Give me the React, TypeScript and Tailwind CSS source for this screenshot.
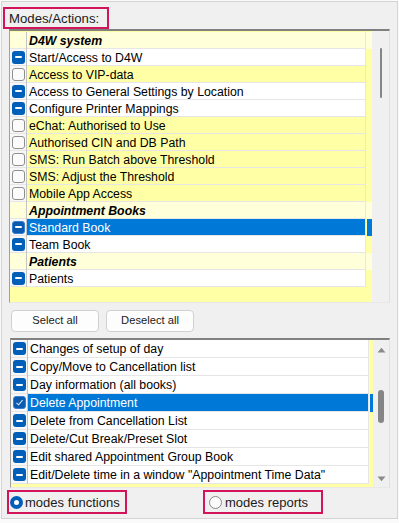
import React from 'react';

type State = 'ind' | 'off' | 'on';
type Row = { label: string; header?: boolean; state?: State; selected?: boolean };

const upperRows: Row[] = [
  { label: 'D4W system', header: true },
  { label: 'Start/Access to D4W', state: 'ind' },
  { label: 'Access to VIP-data', state: 'off' },
  { label: 'Access to General Settings by Location', state: 'ind' },
  { label: 'Configure Printer Mappings', state: 'ind' },
  { label: 'eChat: Authorised to Use', state: 'off' },
  { label: 'Authorised CIN and DB Path', state: 'off' },
  { label: 'SMS: Run Batch above Threshold', state: 'off' },
  { label: 'SMS: Adjust the Threshold', state: 'off' },
  { label: 'Mobile App Access', state: 'off' },
  { label: 'Appointment Books', header: true },
  { label: 'Standard Book', state: 'ind', selected: true },
  { label: 'Team Book', state: 'ind' },
  { label: 'Patients', header: true },
  { label: 'Patients', state: 'ind' },
];

const lowerRows: Row[] = [
  { label: 'Changes of setup of day', state: 'ind' },
  { label: 'Copy/Move to Cancellation list', state: 'ind' },
  { label: 'Day information (all books)', state: 'ind' },
  { label: 'Delete Appointment', state: 'on', selected: true },
  { label: 'Delete from Cancellation List', state: 'ind' },
  { label: 'Delete/Cut Break/Preset Slot', state: 'ind' },
  { label: 'Edit shared Appointment Group Book', state: 'ind' },
  { label: 'Edit/Delete time in a window "Appointment Time Data"', state: 'ind' },
];

const Check = ({ state, selected }: { state: State; selected?: boolean }) => {
  if (state === 'off') {
    return <div className="w-[13px] h-[13px] rounded-[3px] border border-[#8f8f8f] bg-[#fbfbfb]" />;
  }
  return (
    <div
      className={`w-[13px] h-[13px] rounded-[3px] flex items-center justify-center ${
        selected ? 'bg-[#0a5bb0] border border-[#3a7fcf]' : 'bg-[#005fb8]'
      }`}
    >
      {state === 'ind' ? (
        <div className="w-[7px] h-[2px] bg-white rounded-[1px]" />
      ) : (
        <svg width="9" height="9" viewBox="0 0 9 9">
          <path d="M1.5 4.8 L3.6 6.8 L7.6 2" fill="none" stroke="#dfe9f5" strokeWidth="1.1" />
        </svg>
      )}
    </div>
  );
};

const ListRow = ({ row, h, textW, gapW }: { row: Row; h: number; textW: number; gapW: number }) => {
  let bg = 'bg-white';
  if (row.header) bg = 'bg-[#ffffd9]';
  else if (row.state === 'off') bg = 'bg-[#ffffa6]';
  const textBg = row.selected ? 'bg-[#0078d7] text-white' : `${bg} text-black`;
  return (
    <div className="flex" style={{ height: h }}>
      <div className={`w-[16px] shrink-0 flex items-center pl-[2px] border-b border-[#e6e6e6] ${row.header ? 'bg-[#ffffd9]' : 'bg-[#f7f7f7]'}`}>
        {row.state && <Check state={row.state} selected={row.selected} />}
      </div>
      <div className="w-px shrink-0 bg-[#c4c4c4]" />
      <div
        className={`shrink-0 flex items-center pl-[2px] pt-[2px] border-b border-r border-[#e6e6e6] whitespace-nowrap overflow-hidden ${textBg} ${
          row.header ? 'font-bold italic' : ''
        }`}
        style={{ width: textW }}
      >
        {row.label}
      </div>
      <div className="shrink-0 flex" style={{ width: gapW }}>
        {row.selected ? (
          <div className="ml-px flex-1 bg-[#0078d7]" />
        ) : (
          <div className={`flex-1 ${row.header ? 'bg-[#ffffd9]' : 'bg-[#ffffa6]'}`} />
        )}
      </div>
    </div>
  );
};

const Arrow = ({ up }: { up?: boolean }) => (
  <svg width="9" height="6" viewBox="0 0 9 6">
    <path d={up ? 'M0.5 5.5 L4.5 0.8 L8.5 5.5 Z' : 'M0.5 0.5 L4.5 5.2 L8.5 0.5 Z'} fill="#8a8a8a" />
  </svg>
);

export default function App() {
  return (
    <div
      className="w-[399px] h-[523px] bg-[#fafafa] p-px text-[12.3px] leading-none"
      style={{ fontFamily: '"Liberation Sans", Arial, sans-serif' }}
    >
      <div className="h-[518px] border border-[#d4d4d4] bg-[#f0f0f0] flex flex-col">
        {/* label */}
        <div className="mt-[5px] ml-px w-[106px] h-[22px] border-2 border-[#d4145a] flex items-center pl-[4px] pt-px text-[13.2px] text-[#1a1a1a]">
          Modes/Actions:
        </div>

        {/* upper list */}
        <div className="ml-[7px] w-[381px] h-[274px] flex border-t-2 border-t-[#808080] border-l border-l-[#a0a0a0] border-r border-r-[#e0e0e0] border-b border-b-[#e8e8e8]">
          <div className="w-[362px] bg-[#ffffa6] flex flex-col pt-px">
            {upperRows.map((r, i) => (
              <ListRow key={i} row={r} h={17} textW={339} gapW={6} />
            ))}
          </div>
          <div className="flex-1 bg-[#f0f0f0] flex justify-center pt-[17px]">
            <div className="w-[2px] h-[50px] bg-[#858585] rounded-full" />
          </div>
        </div>

        {/* buttons */}
        <div className="mt-[7px] ml-[9px] flex gap-[7px]">
          <button className="w-[88px] h-[22px] rounded-[4px] border border-[#d0d0d0] bg-[#fdfdfd] text-[11.2px] text-[#1a1a1a]">
            Select all
          </button>
          <button className="w-[88px] h-[22px] rounded-[4px] border border-[#d0d0d0] bg-[#fdfdfd] text-[11.2px] text-[#1a1a1a]">
            Deselect all
          </button>
        </div>

        {/* lower list */}
        <div className="mt-[6px] ml-[8px] w-[380px] h-[150px] flex border-t-2 border-t-[#808080] border-l border-l-[#a0a0a0] border-r border-r-[#e0e0e0] border-b border-b-[#e8e8e8]">
          <div className="w-[362px] bg-[#ffffa6] flex flex-col">
            {lowerRows.map((r, i) => (
              <ListRow key={i} row={r} h={18} textW={341} gapW={4} />
            ))}
          </div>
          <div className="flex-1 bg-[#f0f0f0] flex flex-col items-center pt-[7px] pb-[5px]">
            <Arrow up />
            <div className="mt-[37px] w-[6px] h-[33px] bg-[#858585] rounded-full" />
            <div className="flex-1" />
            <Arrow />
          </div>
        </div>

        {/* radios */}
        <div className="mt-[2px] ml-[5px] flex">
          <div className="w-[120px] h-[24px] border-2 border-[#d4145a] flex items-center pl-px gap-[2px] text-[13px] text-[#1a1a1a]">
            <div className="w-[13px] h-[13px] rounded-full bg-[#005fb8] flex items-center justify-center">
              <div className="w-[5px] h-[5px] rounded-full bg-white" />
            </div>
            modes functions
          </div>
          <div className="ml-[76px] w-[120px] h-[24px] border-2 border-[#d4145a] flex items-center pl-[4px] gap-[3px] text-[13px] text-[#1a1a1a]">
            <div className="w-[13px] h-[13px] rounded-full border border-[#8a8a8a] bg-[#fbfbfb]" />
            modes reports
          </div>
        </div>
      </div>
    </div>
  );
}
